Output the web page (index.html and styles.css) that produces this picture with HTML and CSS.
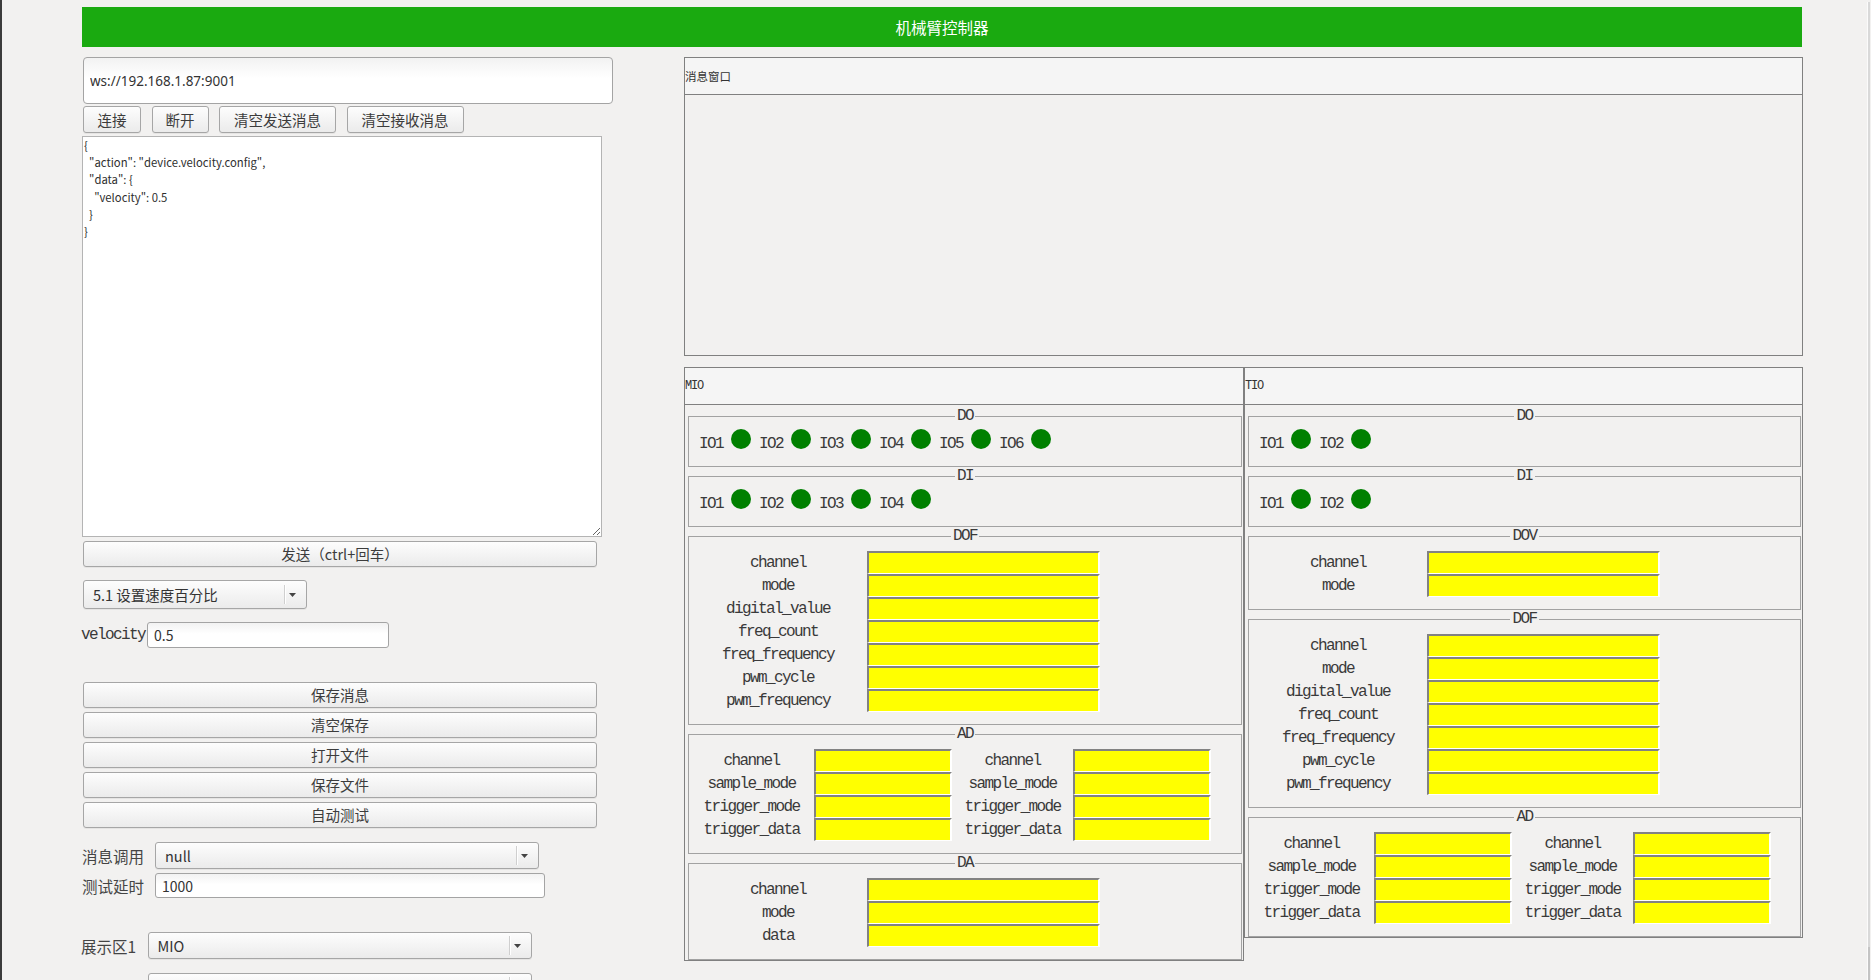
FILE: index.html
```html
<!DOCTYPE html>
<html lang="zh">
<head>
<meta charset="utf-8">
<title>机械臂控制器</title>
<link rel="stylesheet" href="styles.css">
</head>
<body>
<div class="app">
  <header class="titlebar">机械臂控制器</header>
  <div class="main">
    <section class="left">
      <input class="url" type="text" value="ws://192.168.1.87:9001">
      <div class="btn-row">
        <button class="btn w58">连接</button>
        <button class="btn w57">断开</button>
        <button class="btn w117">清空发送消息</button>
        <button class="btn w117">清空接收消息</button>
      </div>
      <textarea class="editor" spellcheck="false">{
  "action": "device.velocity.config",
  "data": {
    "velocity": 0.5
  }
}</textarea>
      <button class="btn btn-wide btn-send">发送（ctrl+回车）</button>
      <div class="combo combo-cmd">
        <span class="combo-text">5.1 设置速度百分比</span>
        <span class="combo-sep"></span>
        <svg class="combo-arrow" width="7" height="4" viewBox="0 0 7 4"><polygon points="0,0 7,0 3.5,4" fill="#444"/></svg>
      </div>
      <div class="field-row row-velocity">
        <span class="lbl lbl-velocity">velocity</span>
        <input class="entry entry-velocity" type="text" value="0.5">
      </div>
      <div class="btn-stack">
        <button class="btn btn-wide">保存消息</button>
        <button class="btn btn-wide">清空保存</button>
        <button class="btn btn-wide">打开文件</button>
        <button class="btn btn-wide">保存文件</button>
        <button class="btn btn-wide">自动测试</button>
      </div>
      <div class="field-row row-call">
        <span class="lbl-cjk lbl-call">消息调用</span>
        <div class="combo combo-call">
          <span class="combo-text">null</span>
          <span class="combo-sep"></span>
          <svg class="combo-arrow" width="7" height="4" viewBox="0 0 7 4"><polygon points="0,0 7,0 3.5,4" fill="#444"/></svg>
        </div>
      </div>
      <div class="field-row row-delay">
        <span class="lbl-cjk lbl-call">测试延时</span>
        <input class="entry entry-delay" type="text" value="1000">
      </div>
      <div class="field-row row-area1">
        <span class="lbl-cjk lbl-area">展示区1</span>
        <div class="combo combo-area">
          <span class="combo-text">MIO</span>
          <span class="combo-sep"></span>
          <svg class="combo-arrow" width="7" height="4" viewBox="0 0 7 4"><polygon points="0,0 7,0 3.5,4" fill="#444"/></svg>
        </div>
      </div>
      <div class="field-row row-area2">
        <span class="lbl-cjk lbl-area">展示区2</span>
        <div class="combo combo-area">
          <span class="combo-text">TIO</span>
          <span class="combo-sep"></span>
          <svg class="combo-arrow" width="7" height="4" viewBox="0 0 7 4"><polygon points="0,0 7,0 3.5,4" fill="#444"/></svg>
        </div>
      </div>
    </section>

    <section class="right">
      <div class="panel msg-panel">
        <div class="panel-head head-cjk">消息窗口</div>
        <div class="msg-body"></div>
      </div>

      <div class="io-panels">
        <div class="panel io-panel mio">
          <div class="panel-head head-mono">MIO</div>
          <div class="io-body">
            <fieldset class="grp grp-led">
              <legend>DO</legend>
              <div class="leds">
                <span class="led-lbl">IO1</span><span class="led"></span>
                <span class="led-lbl">IO2</span><span class="led"></span>
                <span class="led-lbl">IO3</span><span class="led"></span>
                <span class="led-lbl">IO4</span><span class="led"></span>
                <span class="led-lbl">IO5</span><span class="led"></span>
                <span class="led-lbl">IO6</span><span class="led"></span>
              </div>
            </fieldset>
            <fieldset class="grp grp-led">
              <legend>DI</legend>
              <div class="leds">
                <span class="led-lbl">IO1</span><span class="led"></span>
                <span class="led-lbl">IO2</span><span class="led"></span>
                <span class="led-lbl">IO3</span><span class="led"></span>
                <span class="led-lbl">IO4</span><span class="led"></span>
              </div>
            </fieldset>
            <fieldset class="grp">
              <legend>DOF</legend>
              <div class="form1">
                <span class="f-lbl">channel</span><span class="yel"></span>
                <span class="f-lbl">mode</span><span class="yel"></span>
                <span class="f-lbl">digital_value</span><span class="yel"></span>
                <span class="f-lbl">freq_count</span><span class="yel"></span>
                <span class="f-lbl">freq_frequency</span><span class="yel"></span>
                <span class="f-lbl">pwm_cycle</span><span class="yel"></span>
                <span class="f-lbl">pwm_frequency</span><span class="yel"></span>
              </div>
            </fieldset>
            <fieldset class="grp">
              <legend>AD</legend>
              <div class="form2">
                <span class="f-lbl">channel</span><span class="yel"></span><span class="f-lbl">channel</span><span class="yel"></span>
                <span class="f-lbl">sample_mode</span><span class="yel"></span><span class="f-lbl">sample_mode</span><span class="yel"></span>
                <span class="f-lbl">trigger_mode</span><span class="yel"></span><span class="f-lbl">trigger_mode</span><span class="yel"></span>
                <span class="f-lbl">trigger_data</span><span class="yel"></span><span class="f-lbl">trigger_data</span><span class="yel"></span>
              </div>
            </fieldset>
            <fieldset class="grp">
              <legend>DA</legend>
              <div class="form1">
                <span class="f-lbl">channel</span><span class="yel"></span>
                <span class="f-lbl">mode</span><span class="yel"></span>
                <span class="f-lbl">data</span><span class="yel"></span>
              </div>
            </fieldset>
          </div>
        </div>

        <div class="panel io-panel tio">
          <div class="panel-head head-mono">TIO</div>
          <div class="io-body">
            <fieldset class="grp grp-led">
              <legend>DO</legend>
              <div class="leds">
                <span class="led-lbl">IO1</span><span class="led"></span>
                <span class="led-lbl">IO2</span><span class="led"></span>
              </div>
            </fieldset>
            <fieldset class="grp grp-led">
              <legend>DI</legend>
              <div class="leds">
                <span class="led-lbl">IO1</span><span class="led"></span>
                <span class="led-lbl">IO2</span><span class="led"></span>
              </div>
            </fieldset>
            <fieldset class="grp">
              <legend>DOV</legend>
              <div class="form1">
                <span class="f-lbl">channel</span><span class="yel"></span>
                <span class="f-lbl">mode</span><span class="yel"></span>
              </div>
            </fieldset>
            <fieldset class="grp">
              <legend>DOF</legend>
              <div class="form1">
                <span class="f-lbl">channel</span><span class="yel"></span>
                <span class="f-lbl">mode</span><span class="yel"></span>
                <span class="f-lbl">digital_value</span><span class="yel"></span>
                <span class="f-lbl">freq_count</span><span class="yel"></span>
                <span class="f-lbl">freq_frequency</span><span class="yel"></span>
                <span class="f-lbl">pwm_cycle</span><span class="yel"></span>
                <span class="f-lbl">pwm_frequency</span><span class="yel"></span>
              </div>
            </fieldset>
            <fieldset class="grp">
              <legend>AD</legend>
              <div class="form2">
                <span class="f-lbl">channel</span><span class="yel"></span><span class="f-lbl">channel</span><span class="yel"></span>
                <span class="f-lbl">sample_mode</span><span class="yel"></span><span class="f-lbl">sample_mode</span><span class="yel"></span>
                <span class="f-lbl">trigger_mode</span><span class="yel"></span><span class="f-lbl">trigger_mode</span><span class="yel"></span>
                <span class="f-lbl">trigger_data</span><span class="yel"></span><span class="f-lbl">trigger_data</span><span class="yel"></span>
              </div>
            </fieldset>
          </div>
        </div>
      </div>
    </section>
  </div>
</div>
<div class="win-edge"><div class="win-edge-thumb"></div></div>
</body>
</html>
```

FILE: styles.css
```css
html, body {
  margin: 0;
  padding: 0;
  height: 100%;
  overflow: hidden;
}

body {
  background: #f2f1f0;
  border-left: 2px solid #3c3c3c;
  box-sizing: border-box;
  font-family: "Noto Sans CJK SC", "Noto Sans", sans-serif;
  color: #3c3c3c;
}

.app {
  padding: 7px 0 0 80px;
}

.titlebar {
  width: 1720px;
  height: 40px;
  background: #1aaa10;
  color: #ffffff;
  font-family: "Noto Sans CJK SC", sans-serif;
  font-size: 15.5px;
  display: flex;
  align-items: center;
  justify-content: center;
}

.main {
  display: flex;
  align-items: flex-start;
  margin-top: 10px;
}

/* ---------- left column ---------- */
.left {
  width: 530px;
  flex: none;
  display: flex;
  flex-direction: column;
  align-items: flex-start;
}

.url {
  width: 530px;
  height: 47px;
  margin: 0 0 0 1px;
  box-sizing: border-box;
  border: 1px solid #a4a4a4;
  border-radius: 4px;
  background: linear-gradient(#f2f2f2, #ffffff 45%);
  padding: 0 6px;
  font-family: "Noto Sans", "Noto Sans CJK SC", sans-serif;
  font-size: 13.5px;
  color: #333333;
  outline: none;
}

.btn-row {
  display: flex;
  gap: 10.5px;
  margin: 2px 0 0 1px;
}

.btn {
  height: 27px;
  box-sizing: border-box;
  padding: 0;
  margin: 0;
  border: 1px solid #a6a6a6;
  border-radius: 3px;
  background: linear-gradient(#fdfdfd, #ebebeb);
  box-shadow: 0 1px 0 rgba(0, 0, 0, 0.05);
  font-family: "Noto Sans CJK SC", "Noto Sans", sans-serif;
  font-size: 14.5px;
  line-height: 24px;
  color: #3c3c3c;
  text-align: center;
}

.w58 { width: 58px; }
.w57 { width: 57px; }
.w117 { width: 117px; }

.editor {
  display: block;
  width: 520px;
  height: 401px;
  margin: 3px 0 0 0;
  box-sizing: border-box;
  border: 1px solid #b4b4b4;
  background: #ffffff;
  padding: 0 1px;
  font-family: "Noto Sans CJK SC", "Noto Sans", sans-serif;
  font-size: 11.3px;
  line-height: 17.2px;
  color: #2e2e2e;
  outline: none;
}

.btn-wide {
  width: 514px;
  height: 26px;
  margin-left: 1px;
}

.btn-send {
  margin-top: 4px;
}

.combo {
  display: flex;
  align-items: center;
  box-sizing: border-box;
  height: 27px;
  border: 1px solid #a6a6a6;
  border-radius: 3px;
  background: linear-gradient(#fdfdfd, #ebebeb);
  box-shadow: 0 1px 0 rgba(0, 0, 0, 0.05);
  padding-left: 9px;
  font-family: "Noto Sans CJK SC", "Noto Sans", sans-serif;
  font-size: 14.5px;
  color: #333333;
}

.combo-text {
  flex: 1;
  white-space: nowrap;
}

.combo-sep {
  width: 1px;
  height: 19px;
  background: #cfcfcf;
  box-shadow: 1px 0 0 #ffffff;
}

.combo-arrow {
  display: block;
  margin: 1px 10px 0 4px;
}

.combo-cmd {
  width: 224px;
  height: 29px;
  margin: 13px 0 0 1px;
}

.field-row {
  display: flex;
  align-items: center;
}

.lbl {
  font-family: "Liberation Mono", monospace;
  font-size: 16px;
  letter-spacing: -1.6px;
  color: #3a3a3a;
  white-space: nowrap;
}

.lbl-cjk {
  flex: none;
  font-family: "Noto Sans CJK SC", sans-serif;
  font-size: 15.5px;
  color: #444444;
  white-space: nowrap;
}

.entry {
  box-sizing: border-box;
  margin: 0;
  border: 1px solid #a4a4a4;
  border-radius: 3px;
  background: linear-gradient(#f2f2f2, #ffffff 45%);
  padding: 0 6px;
  font-family: "Noto Sans CJK SC", "Noto Sans", sans-serif;
  font-size: 14px;
  color: #333333;
  outline: none;
}

.row-velocity {
  margin-top: 13px;
}

.lbl-velocity {
  width: 65px;
  margin-left: -1px;
}

.entry-velocity {
  width: 242px;
  height: 26px;
  margin-left: 1px;
}

.btn-stack {
  display: flex;
  flex-direction: column;
  gap: 4px;
  margin-top: 34px;
}

.row-call {
  margin-top: 14px;
}

.lbl-call {
  width: 64px;
  margin-right: 9px;
}

.combo-call {
  width: 384px;
}

.row-delay {
  margin-top: 4px;
}

.entry-delay {
  width: 390px;
  height: 25px;
}

.row-area1 {
  margin-top: 34px;
}

.row-area2 {
  margin-top: 14px;
}

.lbl-area {
  width: 54px;
  margin-left: -1px;
  margin-right: 12.5px;
}

.combo-area {
  width: 384px;
}

/* ---------- right column ---------- */
.right {
  width: 1119px;
  flex: none;
  margin-left: 72px;
}

.panel {
  box-sizing: border-box;
  border: 1px solid #808080;
  background: #f2f1f0;
}

.panel-head {
  height: 36px;
  border-bottom: 1px solid #808080;
  background: #f5f5f5;
  display: flex;
  align-items: center;
  color: #333333;
}

.head-cjk {
  font-family: "Noto Sans CJK SC", sans-serif;
  font-size: 11.5px;
}

.head-mono {
  font-family: "Liberation Mono", monospace;
  font-size: 12px;
  letter-spacing: -1.2px;
}

.msg-body {
  height: 260px;
}

.io-panels {
  display: flex;
  align-items: flex-start;
  margin-top: 11px;
}

.mio { width: 560px; }
.tio { width: 559px; }

.io-body {
  padding: 3px 1px 0 3px;
}

.grp {
  margin: 1px 0 0 0;
  padding: 7px 0 12px 0;
  border: 1px solid #a2a2a2;
  min-width: 0;
}

.grp:first-child {
  margin-top: 0;
}

.grp-led {
  padding-top: 4px;
  padding-bottom: 16px;
}

.grp legend {
  margin: 0 auto;
  padding: 0 2px;
  font-family: "Liberation Mono", monospace;
  font-size: 16px;
  letter-spacing: -1.6px;
  line-height: 16px;
  color: #3a3a3a;
}

.leds {
  display: flex;
  align-items: center;
  height: 22px;
  padding-left: 10px;
  gap: 8px;
}

.led-lbl {
  align-self: flex-end;
  margin-bottom: -2px;
  font-family: "Liberation Mono", monospace;
  font-size: 16px;
  letter-spacing: -1.6px;
  line-height: 16px;
  color: #3a3a3a;
}

.led {
  width: 20px;
  height: 20px;
  border-radius: 50%;
  background: #008000;
}

.form1 {
  display: grid;
  grid-template-columns: 178px 233px;
}

.form2 {
  display: grid;
  grid-template-columns: 125px 138px 121px 138px;
}

.f-lbl {
  height: 23px;
  display: flex;
  align-items: center;
  justify-content: center;
  font-family: "Liberation Mono", monospace;
  font-size: 16px;
  letter-spacing: -1.6px;
  color: #3a3a3a;
  white-space: nowrap;
}

.yel {
  height: 23px;
  box-sizing: border-box;
  background: #ffff00;
  border-style: solid;
  border-width: 2px 2px 1px 2px;
  border-color: #828282 #ffffff #ffffff #828282;
}

/* window edge on the right */
.win-edge {
  position: fixed;
  top: 2px;
  right: 1px;
  bottom: 0;
  width: 2px;
  background: #d9d9d9;
  border-left: 1px solid #fbfbfb;
}

.win-edge-thumb {
  position: absolute;
  left: 0;
  right: 0;
  bottom: 0;
  height: 33px;
  background: #c4c4c4;
}
```
